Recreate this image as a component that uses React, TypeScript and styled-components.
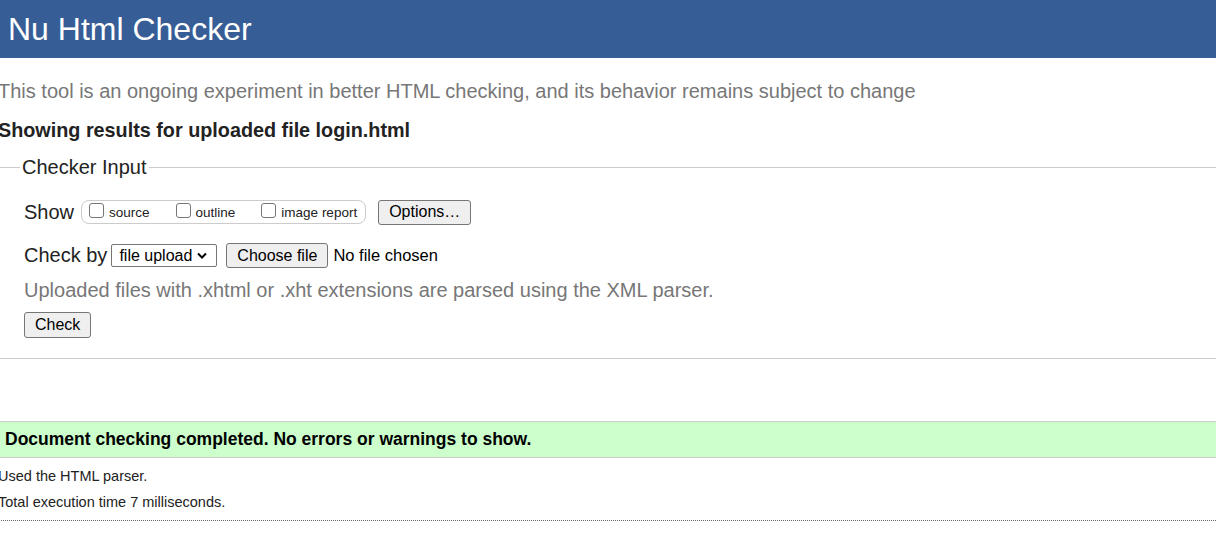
import styled, { createGlobalStyle } from "styled-components";

const GlobalStyle = createGlobalStyle`
  html, body {
    margin: 0;
    padding: 0;
    background: #fff;
    overflow: hidden;
  }
  body {
    font-family: "Liberation Sans", Arial, sans-serif;
    color: #222;
  }
`;

const Header = styled.h1`
  margin: 0;
  height: 58px;
  padding-left: 8px;
  background-color: #365d95;
  color: #fff;
  font-size: 32px;
  font-weight: normal;
  line-height: 58px;
`;

const Content = styled.div`
  margin-left: -2px;
`;

const Intro = styled.p`
  margin: 22px 0 0;
  font-size: 20px;
  color: #777;
`;

const ResultsFor = styled.p`
  margin: 16px 0 0;
  font-size: 19.8px;
  font-weight: bold;
  color: #222;
`;

const InputFieldset = styled.fieldset`
  margin: 14px 0 0;
  padding: 20px 0 20px 26px;
  border: none;
  border-top: 1px solid #ccc;
  border-bottom: 1px solid #ccc;
  min-width: 0;
`;

const Legend = styled.legend`
  margin-left: -4px;
  padding: 0 2px;
  font-size: 20px;
  color: #222;
`;

const Row = styled.div<{ $mt?: number; $h?: number }>`
  display: flex;
  align-items: center;
  margin-top: ${(p) => p.$mt ?? 0}px;
  height: ${(p) => p.$h ?? 26}px;
`;

const RowLabel = styled.span<{ $gap: number }>`
  font-size: 20px;
  margin-right: ${(p) => p.$gap}px;
`;

const CheckGroup = styled.div`
  display: flex;
  align-items: center;
  height: 22px;
  padding: 0 8px 0 7px;
  border: 1px solid #ccc;
  border-radius: 8px;
`;

const CheckItem = styled.label<{ $last?: boolean }>`
  display: flex;
  align-items: center;
  gap: 5px;
  margin-right: ${(p) => (p.$last ? 0 : 26)}px;
  font-size: 13.5px;
  color: #222;
`;

const Box = styled.input`
  appearance: none;
  margin: 0 0 3px;
  width: 15px;
  height: 15px;
  border: 1px solid #767676;
  border-radius: 3px;
  background: #fff;
`;

const Button = styled.button<{ $ml?: number; $h?: number }>`
  margin-left: ${(p) => p.$ml ?? 0}px;
  height: ${(p) => p.$h ?? 25}px;
  padding: 0 10px;
  border: 1px solid #767676;
  border-radius: 3px;
  background: #efefef;
  color: #000;
  font-family: "Liberation Sans", Arial, sans-serif;
  font-size: 16px;
`;

const SelectBox = styled.div`
  display: flex;
  align-items: center;
  gap: 4px;
  height: 21px;
  padding: 0 8px 0 7px;
  border: 1px solid #767676;
  border-radius: 2px;
  background: #fff;
  font-size: 16px;
  color: #000;
`;

const FileStatus = styled.span`
  margin-left: 5px;
  font-size: 16.5px;
  color: #000;
`;

const Note = styled.p`
  margin: 10px 0 0;
  font-size: 20px;
  color: #777;
`;

const Success = styled.div`
  margin: 62px 0 0 2px;
  height: 35px;
  padding-left: 5px;
  border-top: 1px solid #ccc;
  border-bottom: 1px solid #ccc;
  background: #ccffcc;
  color: #000;
  font-size: 17.5px;
  font-weight: bold;
  line-height: 35px;
`;

const Detail = styled.p<{ $mt: number }>`
  margin: ${(p) => p.$mt}px 0 0;
  font-size: 14.5px;
  color: #222;
`;

const Footer = styled.hr`
  margin: 10px 0 0;
  border: none;
  border-top: 1px dotted #666;
`;

const Chevron = () => (
  <svg width="12" height="8" viewBox="0 0 12 8">
    <path d="M2 1.5 L6 5.5 L10 1.5" fill="none" stroke="#000" strokeWidth="2" />
  </svg>
);

const App = () => {
  return (
    <>
      <GlobalStyle />
      <Header>Nu Html Checker</Header>
      <Content>
        <Intro>
          This tool is an ongoing experiment in better HTML checking, and its
          behavior remains subject to change
        </Intro>
        <ResultsFor>Showing results for uploaded file login.html</ResultsFor>
        <InputFieldset>
          <Legend>Checker Input</Legend>
          <Row>
            <RowLabel $gap={7}>Show</RowLabel>
            <CheckGroup>
              <CheckItem>
                <Box type="checkbox" />
                source
              </CheckItem>
              <CheckItem>
                <Box type="checkbox" />
                outline
              </CheckItem>
              <CheckItem $last>
                <Box type="checkbox" />
                image report
              </CheckItem>
            </CheckGroup>
            <Button $ml={12}>Options…</Button>
          </Row>
          <Row $mt={17} $h={27}>
            <RowLabel $gap={4}>Check by</RowLabel>
            <SelectBox>
              file upload
              <Chevron />
            </SelectBox>
            <Button $ml={9}>Choose file</Button>
            <FileStatus>No file chosen</FileStatus>
          </Row>
          <Note>Uploaded files with .xhtml or .xht extensions are parsed using the XML parser.</Note>
          <Row $mt={10}>
            <Button $h={26}>Check</Button>
          </Row>
        </InputFieldset>
        <Success>Document checking completed. No errors or warnings to show.</Success>
        <Detail $mt={10}>Used the HTML parser.</Detail>
        <Detail $mt={10}>Total execution time 7 milliseconds.</Detail>
        <Footer />
      </Content>
    </>
  );
};

export default App;
